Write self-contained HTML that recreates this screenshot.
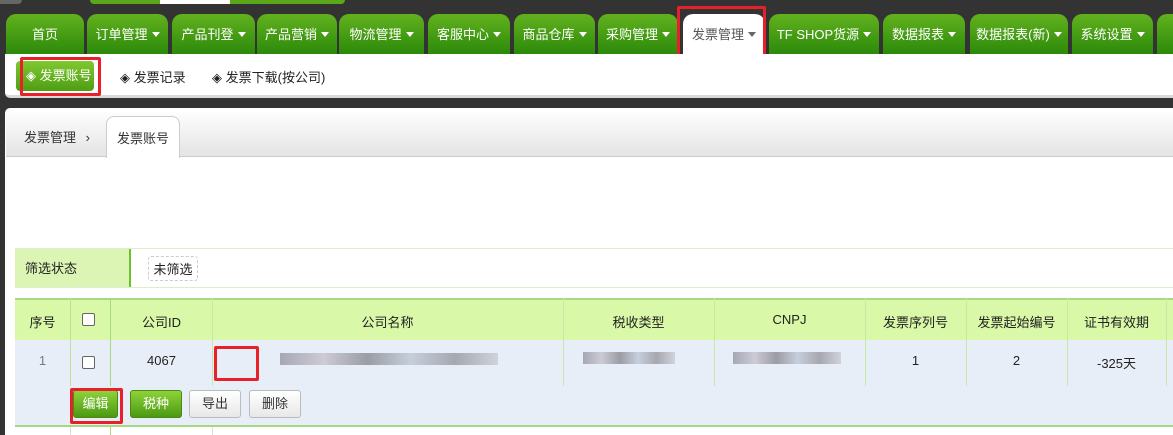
<!DOCTYPE html>
<html><head><meta charset="utf-8"><style>
*{margin:0;padding:0;box-sizing:border-box}
body{width:1173px;height:435px;overflow:hidden;background:#333;font-family:"Liberation Sans","Noto Sans CJK SC",sans-serif;font-size:13px;color:#222;position:relative}
.abs{position:absolute}
.tab{position:absolute;top:14px;height:40px;border-radius:10px 10px 0 0;background:linear-gradient(#62b21e,#2c8a0a);color:#fff;font-size:13px;line-height:42px;text-align:center;white-space:nowrap}
.tab.act{background:#fff;color:#555}
.car{display:inline-block;width:0;height:0;border-left:4px solid transparent;border-right:4px solid transparent;border-top:5px solid currentColor;margin-left:4px;vertical-align:2px}
.red{position:absolute;border:3px solid #e8202a;border-radius:2px}
.th,.td{position:absolute;text-align:center;font-size:13px}
.vl{position:absolute;width:1px}
.btn{position:absolute;top:390px;height:28px;border-radius:3px;font-size:13px;line-height:26px;text-align:center}
.g{background:linear-gradient(#8fd23a,#4a9a12);color:#fff;border:1px solid #4a8a12}
.w{background:linear-gradient(#fff,#e8e8e8);border:1px solid #bbb;color:#333}
.cb{position:absolute;width:13px;height:13px;border:1px solid #666;border-radius:2px;background:#fff}
.blur{position:absolute;height:12px;background:linear-gradient(90deg,#8a8a96,#c0bcc8,#7a7a80,#b8c0d0,#8a8a92,#c8c8d0);opacity:.7}
</style></head><body>
<div class="abs" style="left:90px;top:0;width:255px;height:4px;background:#5aa81a;border-radius:0 0 5px 5px"></div>
<div class="abs" style="left:160px;top:0;width:70px;height:4px;background:#fff"></div>
<div class="abs" style="left:0;top:0;width:22px;height:4px;background:#888;border-radius:0 0 6px 0;opacity:.6"></div>

<div class="tab" style="left:6px;width:78px">首页</div>
<div class="tab" style="left:87px;width:81px">订单管理<span class="car"></span></div>
<div class="tab" style="left:172px;width:83px">产品刊登<span class="car"></span></div>
<div class="tab" style="left:257px;width:80px">产品营销<span class="car"></span></div>
<div class="tab" style="left:339px;width:85px">物流管理<span class="car"></span></div>
<div class="tab" style="left:428px;width:82px">客服中心<span class="car"></span></div>
<div class="tab" style="left:514px;width:81px">商品仓库<span class="car"></span></div>
<div class="tab" style="left:598px;width:80px">采购管理<span class="car"></span></div>
<div class="tab act" style="left:683px;width:82px">发票管理<span class="car" style="color:#666"></span></div>
<div class="tab" style="left:769px;width:110px">TF SHOP货源<span class="car"></span></div>
<div class="tab" style="left:883px;width:82px">数据报表<span class="car"></span></div>
<div class="tab" style="left:970px;width:98px">数据报表(新)<span class="car"></span></div>
<div class="tab" style="left:1072px;width:81px">系统设置<span class="car"></span></div>
<div class="tab" style="left:1157px;width:30px"></div>
<div class="red" style="left:677px;top:6px;width:89px;height:51px"></div>

<div class="abs" style="left:5px;top:54px;width:1168px;height:44px;background:#fff;border-bottom:3px solid #d8d8d8;border-radius:0 0 0 5px"></div>
<div class="abs" style="left:16px;top:61px;width:78px;height:30px;background:linear-gradient(#80c830,#4e9e14);border-radius:4px;color:#fff;line-height:30px;padding-left:10px;font-size:13px;white-space:nowrap">◈ 发票账号</div>
<div class="red" style="left:20px;top:57px;width:81px;height:39px"></div>
<div class="abs" style="left:120px;top:67px;font-size:13px">◈ 发票记录</div>
<div class="abs" style="left:212px;top:67px;font-size:13px">◈ 发票下载(按公司)</div>

<div class="abs" style="left:5px;top:108px;width:1168px;height:327px;background:#fff;border-radius:5px 0 0 0"></div>
<div class="abs" style="left:6px;top:109px;width:1167px;height:48px;background:linear-gradient(#fff,#e4e4e4);border-bottom:1px solid #ccc;border-radius:5px 0 0 0"></div>
<div class="abs" style="left:24px;top:127px;color:#333">发票管理 <span style="margin-left:6px">›</span></div>
<div class="abs" style="left:106px;top:116px;width:74px;height:42px;background:#fff;border:1px solid #ccc;border-bottom:none;border-radius:8px 8px 0 0;text-align:center;line-height:44px;color:#333">发票账号</div>

<div class="abs" style="left:15px;top:248px;width:1158px;height:40px;border-top:1px solid #dcf0c8;border-bottom:1px solid #dcf0c8"></div>
<div class="abs" style="left:15px;top:249px;width:116px;height:38px;background:#dcf5b4;border-right:2px solid #6cc030;line-height:40px;padding-left:10px">筛选状态</div>
<div class="abs" style="left:148px;top:256px;width:50px;height:25px;border:1px dashed #ccc;border-radius:3px;line-height:25px;text-align:center">未筛选</div>

<div class="abs" style="left:15px;top:298px;width:1158px;height:42px;background:#d9f8a8;border-top:2px solid #a8d880"></div>
<div class="abs" style="left:15px;top:340px;width:1158px;height:86px;background:#e8eef7"></div>
<div class="abs" style="left:15px;top:425px;width:1158px;height:2px;background:#a8d880"></div>
<div class="abs" style="left:15px;top:427px;width:1158px;height:8px;background:#fff"></div>
<div class="vl" style="left:70px;top:298px;height:88px;background:#c0e09a"></div>
<div class="vl" style="left:110px;top:298px;height:88px;background:#a8d880"></div>
<div class="vl" style="left:212px;top:298px;height:88px;background:#c8e8a8"></div>
<div class="vl" style="left:563px;top:298px;height:88px;background:#c8e8a8"></div>
<div class="vl" style="left:714px;top:298px;height:88px;background:#c8e8a8"></div>
<div class="vl" style="left:865px;top:298px;height:88px;background:#c8e8a8"></div>
<div class="vl" style="left:966px;top:298px;height:88px;background:#c8e8a8"></div>
<div class="vl" style="left:1067px;top:298px;height:88px;background:#c8e8a8"></div>
<div class="vl" style="left:1166px;top:298px;height:88px;background:#c8e8a8"></div>
<div class="vl" style="left:70px;top:427px;height:8px;background:#ddd"></div>
<div class="vl" style="left:110px;top:427px;height:8px;background:#a8d880"></div>
<div class="vl" style="left:212px;top:427px;height:8px;background:#ddd"></div>

<div class="th" style="left:15px;width:55px;top:312px">序号</div>
<div class="cb" style="left:82px;top:313px"></div>
<div class="th" style="left:111px;width:101px;top:312px">公司ID</div>
<div class="th" style="left:212px;width:351px;top:312px">公司名称</div>
<div class="th" style="left:563px;width:151px;top:312px">税收类型</div>
<div class="th" style="left:714px;width:151px;top:312px">CNPJ</div>
<div class="th" style="left:865px;width:101px;top:312px">发票序列号</div>
<div class="th" style="left:966px;width:101px;top:312px">发票起始编号</div>
<div class="th" style="left:1067px;width:99px;top:312px">证书有效期</div>

<div class="td" style="left:15px;width:55px;top:353px;color:#778">1</div>
<div class="cb" style="left:82px;top:356px"></div>
<div class="td" style="left:111px;width:101px;top:353px">4067</div>
<div class="red" style="left:214px;top:346px;width:45px;height:35px"></div>
<div class="blur" style="left:280px;top:353px;width:218px"></div>
<div class="blur" style="left:583px;top:352px;width:92px"></div>
<div class="blur" style="left:733px;top:352px;width:108px"></div>
<div class="td" style="left:865px;width:101px;top:353px">1</div>
<div class="td" style="left:966px;width:101px;top:353px">2</div>
<div class="td" style="left:1067px;width:99px;top:353px">-325天</div>

<div class="btn g" style="left:73px;width:45px">编辑</div>
<div class="red" style="left:70px;top:388px;width:53px;height:36px"></div>
<div class="btn g" style="left:130px;width:52px">税种</div>
<div class="btn w" style="left:189px;width:52px">导出</div>
<div class="btn w" style="left:249px;width:52px">删除</div>
</body></html>
